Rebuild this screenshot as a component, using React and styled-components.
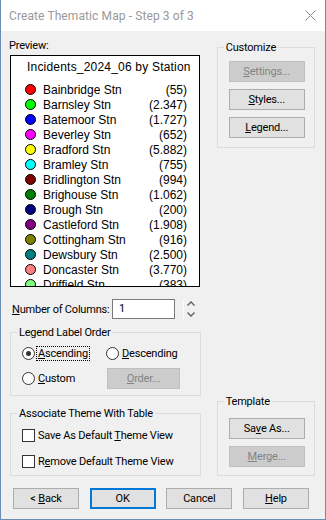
import React from "react";
import styled, { createGlobalStyle, css } from "styled-components";

const GlobalStyle = createGlobalStyle`
  html, body {
    margin: 0;
    padding: 0;
    background: #ffffff;
  }
  body {
    font-family: Roboto, "Liberation Sans", sans-serif;
  }
`;

const legendItems = [
  ["Bainbridge Stn", "55", "#ff0000"],
  ["Barnsley Stn", "2.347", "#00ff00"],
  ["Batemoor Stn", "1.727", "#0000ff"],
  ["Beverley Stn", "652", "#ff00ff"],
  ["Bradford Stn", "5.882", "#ffff00"],
  ["Bramley Stn", "755", "#00ffff"],
  ["Bridlington Stn", "994", "#800000"],
  ["Brighouse Stn", "1.062", "#008000"],
  ["Brough Stn", "200", "#000080"],
  ["Castleford Stn", "1.908", "#800080"],
  ["Cottingham Stn", "916", "#808000"],
  ["Dewsbury Stn", "2.500", "#008080"],
  ["Doncaster Stn", "3.770", "#ff8080"],
  ["Driffield Stn", "383", "#80ff80"],
];

const Window = styled.div`
  box-sizing: border-box;
  width: 326px;
  height: 520px;
  border: 1px solid #6b8db3;
  border-top: none;
  background: #f0f0f0;
  display: flex;
  flex-direction: column;
  font-size: 11px;
  letter-spacing: -0.2px;
  color: #000;
`;

const TitleBar = styled.div`
  height: 31px;
  background: #ffffff;
  display: flex;
  align-items: center;
  justify-content: space-between;
  padding: 0 9px 0 8px;
  flex: none;
`;

const TitleText = styled.span`
  color: #999999;
  font-size: 12px;
  letter-spacing: 0.1px;
  line-height: 15px;
  margin-top: 1px;
`;

const Body = styled.div`
  display: flex;
  flex-direction: column;
  padding: 7px 10px 0 9px;
`;

const Main = styled.div`
  display: flex;
  gap: 16px;
`;

const LeftCol = styled.div`
  width: 192px;
  display: flex;
  flex-direction: column;
`;

const RightCol = styled.div`
  width: 99px;
  display: flex;
  flex-direction: column;
  padding-top: 2px;
`;

const Label = styled.div`
  line-height: 15px;
  margin-left: -1px;
  margin-bottom: 2px;
`;

const PreviewBox = styled.div`
  box-sizing: border-box;
  width: 190px;
  height: 232px;
  border: 1px solid #000;
  background: #ffffff;
  overflow: hidden;
  padding: 4px 12px 0 14px;
  font-family: "Liberation Sans", Arial, sans-serif;
  font-size: 12px;
  letter-spacing: 0;
`;

const PreviewTitle = styled.div`
  line-height: 15px;
  padding-left: 2px;
  margin-bottom: 7px;
  white-space: nowrap;
  letter-spacing: 0.2px;
`;

const LegendRow = styled.div`
  display: flex;
  align-items: center;
  height: 15px;
  white-space: nowrap;
`;

const Swatch = styled.span`
  box-sizing: border-box;
  width: 11px;
  height: 11px;
  border-radius: 50%;
  border: 1px solid #000;
  background: ${(p) => p.$color};
  margin-right: 7px;
  flex: none;
`;

const RowName = styled.span`
  flex: 1;
`;

const ColumnsRow = styled.div`
  display: flex;
  align-items: center;
  height: 20px;
  margin-top: 12px;
  padding-left: 2px;
`;

const ColumnsLabel = styled.span`
  width: 100px;
  white-space: nowrap;
`;

const NumberInput = styled.div`
  box-sizing: border-box;
  width: 63px;
  height: 20px;
  border: 1px solid #7a7a7a;
  background: #ffffff;
  padding-left: 6px;
  line-height: 18px;
`;

const Spinner = styled.div`
  box-sizing: border-box;
  height: 20px;
  margin-left: 8px;
  border-left: 1px solid #fbfbfb;
  padding: 2px 0 2px 3px;
  display: flex;
  flex-direction: column;
  justify-content: space-between;
`;

const Group = styled.fieldset`
  margin: 0;
  padding: 0 0 0 6px;
  border: 1px solid #dcdcdc;
  min-width: 0;
  ${(p) =>
    p.$top &&
    css`
      margin-top: ${p.$top};
    `}
`;

const GroupLegend = styled.legend`
  padding: 0 2px;
  line-height: 15px;
`;

const GroupInner = styled.div`
  padding: ${(p) => p.$pad};
  display: flex;
  flex-direction: column;
  gap: ${(p) => p.$gap || 7}px;
`;

const OrderGrid = styled.div`
  display: grid;
  grid-template-columns: 84px auto;
  grid-template-rows: 13px 21px;
  row-gap: 8px;
  align-items: center;
  padding: 7px 0 6px 5px;
`;

const Choice = styled.label`
  display: flex;
  align-items: center;
  height: 13px;
  white-space: nowrap;
`;

const RadioDot = styled.span`
  box-sizing: border-box;
  width: 13px;
  height: 13px;
  border-radius: 50%;
  border: 1px solid #333333;
  background: #ffffff;
  display: flex;
  align-items: center;
  justify-content: center;
  flex: none;
  margin-right: 2px;
  &::after {
    content: "";
    width: 5px;
    height: 5px;
    border-radius: 50%;
    background: ${(p) => (p.$checked ? "#333333" : "transparent")};
  }
`;

const CheckBox = styled.span`
  box-sizing: border-box;
  width: 13px;
  height: 13px;
  border: 1px solid #333333;
  background: #ffffff;
  flex: none;
  margin-right: 2px;
`;

const ChoiceText = styled.span`
  padding: 0 1px;
  line-height: 13px;
  white-space: pre;
  outline: ${(p) => (p.$focus ? "1px dotted #000" : "none")};
`;

const Button = styled.button`
  box-sizing: border-box;
  width: ${(p) => p.$w || 76}px;
  height: 21px;
  padding: 0;
  margin: 0;
  font: inherit;
  letter-spacing: inherit;
  color: #000;
  background: #e1e1e1;
  border: 1px solid #adadad;
  border-radius: 0;
  &:disabled {
    background: #cccccc;
    border-color: #bfbfbf;
    color: #838383;
  }
  ${(p) =>
    p.$default &&
    css`
      border: 2px solid #0078d7;
    `}
`;

const OrderButton = styled(Button)`
  margin-left: 1px;
`;

const Template = styled(Group)`
  margin-top: auto;
`;

const ButtonRow = styled.div`
  display: flex;
  justify-content: space-between;
  margin-top: 12px;
  padding: 0 6px 0 3px;
`;

const Key = styled.u`
  text-decoration: underline;
  text-underline-offset: 1px;
`;

function Chevron({ up }) {
  return (
    <svg width="8" height="5" viewBox="0 0 8 5">
      <path
        d={up ? "M0.5 4.5 L4 1 L7.5 4.5" : "M0.5 0.5 L4 4 L7.5 0.5"}
        fill="none"
        stroke="#5a5a5a"
        strokeWidth="1.3"
      />
    </svg>
  );
}

function CloseIcon() {
  return (
    <svg width="11" height="11" viewBox="0 0 11 11">
      <path d="M0.5 0.5 L10.5 10.5 M10.5 0.5 L0.5 10.5" stroke="#8a8a8a" strokeWidth="1" />
    </svg>
  );
}

function App() {
  return (
    <>
      <GlobalStyle />
      <Window>
        <TitleBar>
          <TitleText>Create Thematic Map - Step 3 of 3</TitleText>
          <CloseIcon />
        </TitleBar>
        <Body>
          <Main>
            <LeftCol>
              <Label>Preview:</Label>
              <PreviewBox>
                <PreviewTitle>Incidents_2024_06 by Station</PreviewTitle>
                {legendItems.map(([name, count, color]) => (
                  <LegendRow key={name}>
                    <Swatch $color={color} />
                    <RowName>{name}</RowName>
                    <span>({count})</span>
                  </LegendRow>
                ))}
              </PreviewBox>

              <ColumnsRow>
                <ColumnsLabel>
                  <Key>N</Key>umber of Columns:
                </ColumnsLabel>
                <NumberInput>1</NumberInput>
                <Spinner>
                  <Chevron up />
                  <Chevron />
                </Spinner>
              </ColumnsRow>

              <Group $top="6px">
                <GroupLegend>Legend Label Order</GroupLegend>
                <OrderGrid>
                  <Choice>
                    <RadioDot $checked />
                    <ChoiceText $focus>
                      <Key>A</Key>scending
                    </ChoiceText>
                  </Choice>
                  <Choice>
                    <RadioDot />
                    <ChoiceText>
                      <Key>D</Key>escending
                    </ChoiceText>
                  </Choice>
                  <Choice>
                    <RadioDot />
                    <ChoiceText>
                      <Key>C</Key>ustom
                    </ChoiceText>
                  </Choice>
                  <OrderButton disabled $w={73}>
                    <Key>O</Key>rder...
                  </OrderButton>
                </OrderGrid>
              </Group>

              <Group $top="10px">
                <GroupLegend>Associate Theme With Table</GroupLegend>
                <GroupInner $pad="8px 0 7px 5px" $gap={13}>
                  <Choice>
                    <CheckBox />
                    <ChoiceText>
                      {"Save As Default "}
                      <Key>T</Key>heme View
                    </ChoiceText>
                  </Choice>
                  <Choice>
                    <CheckBox />
                    <ChoiceText>
                      R<Key>e</Key>move Default Theme View
                    </ChoiceText>
                  </Choice>
                </GroupInner>
              </Group>
            </LeftCol>

            <RightCol>
              <Group>
                <GroupLegend>Customize</GroupLegend>
                <GroupInner $pad="6px 0 9px 5px">
                  <Button disabled>
                    <Key>S</Key>ettings...
                  </Button>
                  <Button>
                    <Key>S</Key>tyles...
                  </Button>
                  <Button>
                    <Key>L</Key>egend...
                  </Button>
                </GroupInner>
              </Group>

              <Template>
                <GroupLegend>Template</GroupLegend>
                <GroupInner $pad="9px 0 8px 5px">
                  <Button>
                    Sa<Key>v</Key>e As...
                  </Button>
                  <Button disabled>
                    <Key>M</Key>erge...
                  </Button>
                </GroupInner>
              </Template>
            </RightCol>
          </Main>

          <ButtonRow>
            <Button $w={66}>
              &lt; <Key>B</Key>ack
            </Button>
            <Button $w={66} $default>
              OK
            </Button>
            <Button $w={66}>Cancel</Button>
            <Button $w={66}>
              <Key>H</Key>elp
            </Button>
          </ButtonRow>
        </Body>
      </Window>
    </>
  );
}

export default App;
